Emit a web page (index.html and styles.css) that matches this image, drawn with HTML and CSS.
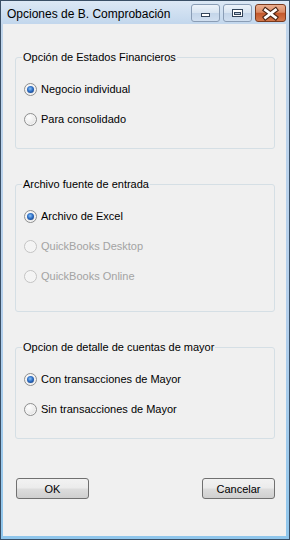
FILE: index.html
```html
<!DOCTYPE html>
<html lang="es">
  <head>
    <meta charset="UTF-8" />
    <meta name="viewport" content="width=device-width, initial-scale=1.0" />
    <title>Opciones de B. Comprobación</title>
    <link rel="stylesheet" href="styles.css">
  </head>
  <body>
    <div class="window">
      <div class="titlebar">
        <span class="title">Opciones de B. Comprobación</span>
        <div class="caption">
          <button class="cap cap-min">
            <svg width="29" height="18" viewBox="0 0 29 18">
              <rect x="10.5" y="9.5" width="8" height="3" fill="#fff" stroke="#33445a" />
            </svg>
          </button>
          <button class="cap cap-max">
            <svg width="29" height="18" viewBox="0 0 29 18">
              <rect x="9.5" y="5.5" width="10" height="7" fill="#fff" stroke="#33445a" />
              <rect x="11.5" y="8.5" width="6" height="2" fill="#b9c9dc" stroke="#33445a" />
            </svg>
          </button>
          <button class="cap cap-close">
            <svg width="31" height="18" viewBox="0 0 31 18">
              <path d="M10.5 6 L20.5 13.5 M20.5 6 L10.5 13.5" stroke="#4a2414" stroke-width="5" stroke-linecap="square" />
              <path d="M10.5 6 L20.5 13.5 M20.5 6 L10.5 13.5" stroke="#fff" stroke-width="2.8" stroke-linecap="square" />
            </svg>
          </button>
        </div>
      </div>

      <div class="client">
        <fieldset class="group">
          <legend>Opción de Estados Financieros</legend>
          <label class="option"><span class="radio checked"></span>Negocio individual</label>
          <label class="option"><span class="radio"></span>Para consolidado</label>
        </fieldset>

        <fieldset class="group group-tall">
          <legend>Archivo fuente de entrada</legend>
          <label class="option"><span class="radio checked"></span>Archivo de Excel</label>
          <label class="option disabled"><span class="radio"></span>QuickBooks Desktop</label>
          <label class="option disabled"><span class="radio"></span>QuickBooks Online</label>
        </fieldset>

        <fieldset class="group">
          <legend>Opcion de detalle de cuentas de mayor</legend>
          <label class="option"><span class="radio checked"></span>Con transacciones de Mayor</label>
          <label class="option"><span class="radio"></span>Sin transacciones de Mayor</label>
        </fieldset>

        <div class="actions">
          <button class="btn">OK</button>
          <button class="btn">Cancelar</button>
        </div>
      </div>
    </div>
  </body>
</html>
```

FILE: styles.css
```css
* {
  margin: 0;
  padding: 0;
  box-sizing: border-box;
}
body {
  width: 290px;
  height: 540px;
  font-family: "Liberation Sans", Arial, sans-serif;
  font-size: 11px;
  color: #000;
  background: #fff;
}
.window {
  width: 290px;
  height: 540px;
  border: 1px solid #3a4f66;
  background: linear-gradient(#dce8f5, #c1d6ec 24px, #b3cfec 60%, #8fc6ec);
  display: flex;
  flex-direction: column;
}

/* title bar */
.titlebar {
  height: 23px;
  display: flex;
  align-items: flex-start;
  padding: 3px 3px 0 6px;
}
.title {
  flex: 1;
  font-family: "Liberation Sans", Arial, sans-serif;
  font-size: 12px;
  line-height: 18px;
  margin-top: 1px;
  color: #000;
}
.caption {
  display: flex;
  gap: 3px;
}
.cap {
  width: 29px;
  height: 18px;
  border: 1px solid #8a9db5;
  border-radius: 3px;
  display: flex;
  align-items: center;
  justify-content: center;
  background: linear-gradient(#edf3fa 0, #d8e4f1 48%, #c4d5e9 52%, #d0dff0 100%);
}
.cap svg {
  display: block;
  flex-shrink: 0;
}
.cap-close {
  width: 31px;
  border-color: #7a3a1e;
  background: linear-gradient(#ebae90 0, #db8c66 45%, #c4582c 52%, #d4784c 100%);
}

/* client area */
.client {
  flex: 1;
  margin: 0 3px 3px 2px;
  background: #f0f0f0;
  padding-top: 27px;
}
.group {
  margin: 0 11px 29px 12px;
  border: 1px solid #d5dfe5;
  border-radius: 3px;
  padding: 10px 0 14px 6px;
}
.group-tall {
  padding-bottom: 20px;
}
.group legend {
  padding: 0 1px;
  line-height: 13px;
}
.option {
  height: 30px;
  display: flex;
  align-items: center;
  gap: 4px;
  padding-left: 2px;
}
.radio {
  width: 13px;
  height: 13px;
  border-radius: 50%;
  border: 1px solid #8e8f8f;
  background: radial-gradient(circle at 35% 30%, #ffffff, #ececec 55%, #d4d4d4);
  box-shadow: inset 0 0 0 1px #f6f6f6;
  display: flex;
  align-items: center;
  justify-content: center;
}
.radio.checked::after {
  content: "";
  width: 7px;
  height: 7px;
  border-radius: 50%;
  background: radial-gradient(circle at 45% 40%, #8cc4f6 0, #2e6fc6 45%, #0b2f6b 100%);
}
.option.disabled {
  color: #a3a3a3;
}
.option.disabled .radio {
  border-color: #c4c4c4;
  background: #f4f4f4;
}

/* buttons */
.actions {
  display: flex;
  justify-content: space-between;
  margin: 39px 11px 0 13px;
}
.btn {
  width: 73px;
  height: 21px;
  border: 1px solid #707070;
  border-radius: 3px;
  background: linear-gradient(#f2f2f2 0, #ebebeb 48%, #dddddd 52%, #cfcfcf 100%);
  font-family: "Liberation Sans", Arial, sans-serif;
  font-size: 11px;
  color: #000;
}
```
